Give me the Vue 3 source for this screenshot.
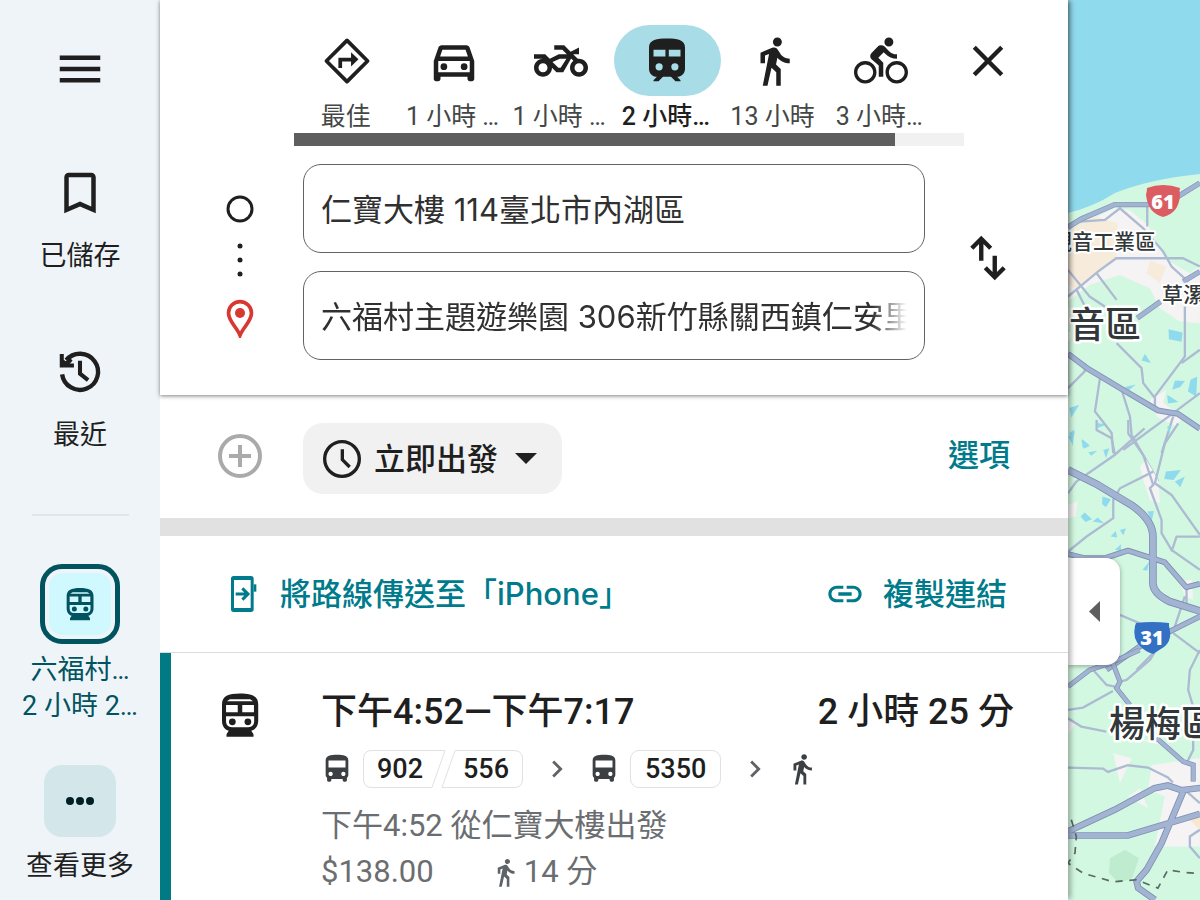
<script setup>
import { ref } from 'vue'

const glyphs = {
  menu: 'M3 18h18v-2H3v2zm0-5h18v-2H3v2zm0-7v2h18V6H3z',
  bookmark: 'M17 3H7c-1.1 0-1.99.9-1.99 2L5 21l7-3 7 3V5c0-1.1-.9-2-2-2zm0 15l-5-2.18L7 18V5h10v13z',
  car: 'M18.92 6.01C18.72 5.42 18.16 5 17.5 5h-11c-.66 0-1.21.42-1.42 1.01L3 12v8c0 .55.45 1 1 1h1c.55 0 1-.45 1-1v-1h12v1c0 .55.45 1 1 1h1c.55 0 1-.45 1-1v-8l-2.08-5.99zM6.85 7h10.29l1.04 3H5.81l1.04-3zM19 17H5v-5h14v5zM7.5 13a1.5 1.5 0 1 0 0 3 1.5 1.5 0 0 0 0-3zm9 0a1.5 1.5 0 1 0 0 3 1.5 1.5 0 0 0 0-3z',
  motorcycle: 'M20 11c-.18 0-.36.03-.53.05L17.41 9H20V6l-3.72 1.86L13.41 5H9v2h3.59l2 2H11l-4 2-2-2H0v2h4c-2.21 0-4 1.79-4 4s1.79 4 4 4 4-1.79 4-4l2 2h3l3.49-6.1 1.01 1.01c-.91.73-1.5 1.84-1.5 3.09 0 2.21 1.79 4 4 4s4-1.79 4-4-1.79-4-4-4zM4 17c-1.1 0-2-.9-2-2s.9-2 2-2 2 .9 2 2-.9 2-2 2zm7.84-2h-1.01L8.2 12.4l3.27-1.4h2.94l-2.57 4zM20 17c-1.1 0-2-.9-2-2s.9-2 2-2 2 .9 2 2-.9 2-2 2z',
  train: 'M12 2c-4.42 0-8 .5-8 4v9.5C4 17.43 5.57 19 7.5 19L6 20.5v.5h2.23l2-2h3.54l2 2H18v-.5L16.5 19c1.93 0 3.5-1.57 3.5-3.5V6c0-3.5-3.58-4-8-4zM6 7h5.3v3H6zm6.8 0H18v3h-5.2zM8.5 13a1.6 1.6 0 1 1 0 3.2 1.6 1.6 0 0 1 0-3.2zm7 0a1.6 1.6 0 1 1 0 3.2 1.6 1.6 0 0 1 0-3.2z',
  walk: 'M13.5 5.5c1.1 0 2-.9 2-2s-.9-2-2-2-2 .9-2 2 .9 2 2 2zM9.8 8.9L7 23h2.1l1.8-8 2.1 2v6h2v-7.5l-2.1-2 .6-3C14.8 12 16.8 13 19 13v-2c-1.9 0-3.5-1-4.3-2.4l-1-1.6c-.4-.6-1-1-1.7-1-.3 0-.5.1-.8.1L6 8.3V13h2V9.6l1.8-.7',
  bike: 'M15.5 5.5c1.1 0 2-.9 2-2s-.9-2-2-2-2 .9-2 2 .9 2 2 2zM5 12c-2.8 0-5 2.2-5 5s2.2 5 5 5 5-2.2 5-5-2.2-5-5-5zm0 8.5c-1.9 0-3.5-1.6-3.5-3.5s1.6-3.5 3.5-3.5 3.5 1.6 3.5 3.5-1.6 3.5-3.5 3.5zm5.8-10l2.4-2.4.8.8c1.3 1.3 3 2.1 5.1 2.1V9c-1.5 0-2.7-.6-3.6-1.5l-1.9-1.9c-.5-.4-1-.6-1.6-.6s-1.1.2-1.4.6L7.8 8.4c-.4.4-.6.9-.6 1.4 0 .6.2 1.1.6 1.4L11 14v5h2v-6.2l-2.2-2.3zM19 12c-2.8 0-5 2.2-5 5s2.2 5 5 5 5-2.2 5-5-2.2-5-5-5zm0 8.5c-1.9 0-3.5-1.6-3.5-3.5s1.6-3.5 3.5-3.5 3.5 1.6 3.5 3.5-1.6 3.5-3.5 3.5z',
  close: 'M19 6.41L17.59 5 12 10.59 6.41 5 5 6.41 10.59 12 5 17.59 6.41 19 12 13.41 17.59 19 19 17.59 13.41 12z',
  link: 'M3.9 12c0-1.71 1.39-3.1 3.1-3.1h4V7H7c-2.76 0-5 2.24-5 5s2.24 5 5 5h4v-1.9H7c-1.71 0-3.1-1.39-3.1-3.1zM8 13h8v-2H8v2zm9-6h-4v1.9h4c1.71 0 3.1 1.39 3.1 3.1s-1.39 3.1-3.1 3.1h-4V17h4c2.76 0 5-2.24 5-5s-2.24-5-5-5z',
  bus: 'M4 16c0 .88.39 1.67 1 2.22V20c0 .55.45 1 1 1h1c.55 0 1-.45 1-1v-1h8v1c0 .55.45 1 1 1h1c.55 0 1-.45 1-1v-1.78c.61-.55 1-1.34 1-2.22V6c0-3.5-3.58-4-8-4s-8 .5-8 4v10zm3.5 1c-.83 0-1.5-.67-1.5-1.5S6.67 14 7.5 14s1.5.67 1.5 1.5S8.33 17 7.5 17zm9 0c-.83 0-1.5-.67-1.5-1.5s.67-1.5 1.5-1.5 1.5.67 1.5 1.5-.67 1.5-1.5 1.5zm1.5-6H6V6h12v5z',
  chevron: 'M10 6L8.59 7.41 13.17 12l-4.58 4.59L10 18l6-6z',
  railcar: 'M12 2.4C6.8 2.4 4 3.6 4 7.2v7.5c0 2.5 1.5 4 3 4.3l-1 1.5v1.2h12v-1.2L17 19c1.5-.3 3.1-1.8 3.1-4.3V7.2C20.1 3.6 17.2 2.4 12 2.4zM7.5 5h9l1.3.9H6.2zM5.8 7.5H11v3.3H5.8zm7.200 0h5.200v3.300H13zM5.800 12.600h12.500v2.200c0 1.600-1 2.600-2.600 2.600H8.400c-1.600 0-2.600-1-2.600-2.600zM8.600 13.500a1.500 1.500 0 1 0 0 3 1.500 1.500 0 0 0 0-3zm6.900 0a1.500 1.500 0 1 0 0 3 1.500 1.500 0 0 0 0-3z'
}

const modes = [
  { icon: 'best', label: '最佳' },
  { icon: 'car', label: '1 小時 …' },
  { icon: 'motorcycle', label: '1 小時 …' },
  { icon: 'train', label: '2 小時…' },
  { icon: 'walk', label: '13 小時' },
  { icon: 'bike', label: '3 小時…' }
]
const activeMode = ref('train')
const origin = ref('仁寶大樓 114臺北市內湖區')
const destination = ref('六福村主題遊樂園 306新竹縣關西鎮仁安里')
</script>

<template>
  <div class="app" lang="zh-Hant">
    <nav class="rail">
      <button class="rail-item" aria-label="選單">
        <svg class="i54" viewBox="0 0 24 24"><path :d="glyphs.menu" /></svg>
      </button>
      <button class="rail-item saved">
        <svg class="i54" viewBox="0 0 24 24"><path :d="glyphs.bookmark" /></svg>
        <span>已儲存</span>
      </button>
      <button class="rail-item recent">
        <svg class="i54" viewBox="0 0 160 160">
          <g fill="none" stroke="currentColor" stroke-width="13">
            <path d="M27 87a53.500 53.500 0 1 0 12-42" />
            <path d="M80 47v38l24 19" stroke-width="12" />
          </g>
          <path d="M20 27h12v17l14 11h16v12H20z" />
          <path d="M30 58l18-22 10 10-12 14z" />
        </svg>
        <span>最近</span>
      </button>
      <hr class="rail-rule" />
      <button class="rail-item trip">
        <span class="trip-tile"><svg class="i40" viewBox="0 0 24 24"><path fill-rule="evenodd" :d="glyphs.railcar" /></svg></span>
        <span class="trip-text">六福村…<br />2 小時 2…</span>
      </button>
      <button class="rail-item more">
        <span class="more-tile"><svg class="i40" viewBox="0 0 40 40"><circle cx="10" cy="20" r="4" /><circle cx="20" cy="20" r="4" /><circle cx="30" cy="20" r="4" /></svg></span>
        <span>查看更多</span>
      </button>
    </nav>

    <main class="panel">
      <header class="search">
        <div class="mode-row">
          <div class="mode-scroller">
            <div class="modes">
              <button v-for="m in modes" :key="m.icon" class="mode" :class="{ active: activeMode === m.icon }" @click="activeMode = m.icon">
                <span class="pill">
                  <svg v-if="m.icon === 'best'" class="i54" viewBox="0 0 160 160">
                    <path d="M80 19l61 61-61 61-61-61z" fill="none" stroke="currentColor" stroke-width="11" stroke-linejoin="round" />
                    <path d="M60 101V76h36" fill="none" stroke="currentColor" stroke-width="11" />
                    <path d="M92 54l22 21-22 21z" />
                  </svg>
                  <svg v-else class="i54" viewBox="0 0 24 24"><path fill-rule="evenodd" :d="glyphs[m.icon]" /></svg>
                </span>
                <span class="mode-label">{{ m.label }}</span>
              </button>
            </div>
            <div class="scrollbar"><div class="thumb"></div></div>
          </div>
          <button class="close" aria-label="關閉"><svg viewBox="1 1 22 22"><path :d="glyphs.close" /></svg></button>
        </div>

        <div class="waypoints">
          <div class="markers">
            <svg class="start" viewBox="0 0 28 28"><circle cx="14" cy="14" r="12" fill="none" stroke="currentColor" stroke-width="3" /></svg>
            <svg class="dots" viewBox="0 0 10 34"><circle cx="5" cy="3" r="2.500" /><circle cx="5" cy="17" r="2.500" /><circle cx="5" cy="31" r="2.500" /></svg>
            <svg class="pin" viewBox="0 0 90 120">
              <path d="M45 11C26 11 10.500 26 10.500 45c0 25 24 41 34.500 67 10.500-26 34.500-42 34.500-67C79.500 26 64 11 45 11z" fill="none" stroke="currentColor" stroke-width="11" />
              <circle cx="45" cy="45" r="15" />
            </svg>
          </div>
          <div class="fields">
            <div class="field"><input v-model="origin" aria-label="起點" /></div>
            <div class="field"><input v-model="destination" class="fade" aria-label="目的地" /></div>
          </div>
          <button class="swap" aria-label="交換起點與目的地">
            <svg class="i54" viewBox="0 0 160 160" fill="none" stroke="currentColor" stroke-width="13">
              <path d="M60 88V24M32 51l28-28 28 28M100 73v64M72 109l28 28 28-28" />
            </svg>
          </button>
        </div>
      </header>

      <section class="options">
        <button class="add" aria-label="新增目的地">
          <svg viewBox="0 0 46 46" fill="none" stroke="currentColor" stroke-width="4"><circle cx="23" cy="23" r="20" /><path d="M12 23h22M23 12v22" /></svg>
        </button>
        <button class="depart">
          <svg class="i40" viewBox="0 0 120 120" fill="none" stroke="currentColor" stroke-width="10"><circle cx="60" cy="60" r="52" /><path d="M61 31v31l22 22" /></svg>
          <span>立即出發</span>
          <svg class="caret" viewBox="0 0 22 11"><path d="M0 0h22L11 11z" /></svg>
        </button>
        <a class="opt-link" href="#">選項</a>
      </section>

      <section class="share">
        <a href="#" class="send">
          <svg class="i40" viewBox="0 0 120 120">
            <path d="M14 6h52q8 0 8 8v92q0 8-8 8H14q-8 0-8-8V14q0-8 8-8zm1 12v84h50V18z" fill-rule="evenodd" />
            <path d="M74 31h8v22h-8z" />
            <path d="M20 60h32M40 43l17 17-17 17" fill="none" stroke="currentColor" stroke-width="9" />
          </svg>
          <span>將路線傳送至「iPhone」</span>
        </a>
        <a href="#" class="copy">
          <svg class="i40" viewBox="0 0 24 24"><path :d="glyphs.link" /></svg>
          <span>複製連結</span>
        </a>
      </section>

      <article class="route">
        <svg class="i54 route-icon" viewBox="0 0 24 24"><path fill-rule="evenodd" :d="glyphs.railcar" /></svg>
        <div class="route-body">
          <div class="route-head"><h2>下午4:52—下午7:17</h2><strong>2 小時 25 分</strong></div>
          <div class="legs">
            <svg class="i34" viewBox="0 0 24 24"><path :d="glyphs.bus" /></svg>
            <span class="pair">
              <svg class="pair-outline" viewBox="0 0 160 38" fill="none" stroke="currentColor"><path d="M82 .5H9Q.5 .5 .5 9v20q0 8.500 8.500 8.500h60zM92 .5h59q8.500 0 8.500 8.500v20q0 8.500-8.500 8.500H79z" /></svg>
              <b>902</b><b>556</b>
            </span>
            <svg class="i34 sep" viewBox="0 0 24 24"><path :d="glyphs.chevron" /></svg>
            <svg class="i34" viewBox="0 0 24 24"><path :d="glyphs.bus" /></svg>
            <span class="chip">5350</span>
            <svg class="i34 sep" viewBox="0 0 24 24"><path :d="glyphs.chevron" /></svg>
            <svg class="i34" viewBox="0 0 24 24"><path :d="glyphs.walk" /></svg>
          </div>
          <p>下午4:52 從仁寶大樓出發</p>
          <p class="fare"><span>$138.00</span><svg viewBox="0 0 24 24"><path :d="glyphs.walk" /></svg><span>14 分</span></p>
        </div>
      </article>
    </main>

    <aside class="map">
      <svg class="map-art" viewBox="1068 0 132 900" preserveAspectRatio="xMinYMin slice">
        <rect x="1068" width="1400" height="900" fill="#d3f8e2" />
        <path d="M1068 0h1400v120L1200 174q-50 5-85 19-22 14-47 20z" fill="#90daee" />
        <g transform="translate(1060 150) scale(.333)">
          <path d="M24 240l140-65 45 5 55 45 50 100 75 45 31-20v170l-60-5-60-40-30-60-90-40-90 30-66 50z" fill="#f5f3f3" />
          <path d="M24 240l80-40 70 20-5 100-60 50-60 50-25-20zM270 330l50 20-20 50-40-30z" fill="#f7ecdc" />
          <path d="M270 750l50-30-10 40 60 40-20 30-60-30z" fill="#f5f3f3" />
          <g fill="#90daee"><path d="M326 538l42 10-3 28-38-8zM255 612l18 28-28-8zM345 692l30 2-14 18-24 8zM392 690l20-10-3 60-25-15zM322 735l34 22-32 4zM195 712l33-8-22 18zM28 775l30-10-24 38zM110 820l32 4-28 10zM28 850l15-10-5 50zM66 868l22 18-20 8z" /></g>
          <g fill="none" stroke="#adbbd2" stroke-width="7">
            <path d="M60 215l75-5 45-35 70 60 60 70 25 45 50 45M262 170v60M24 360l65 80 60 40M24 440l90-75 55-40h200l51 25M110 370l60 80M50 420l30 60M170 580l75 75 5 45 35 45M375 470v150l-90 120v40M420 600l-55 40M24 715l50-50v-25M120 685l-15 100 50 65 5 60M185 720l25 80 5 55 80 140M420 730l-80 60-150 110M340 800l-35 110" />
          </g>
          <g fill="none" stroke="#8495b9" stroke-width="16"><path d="M24 232l40-25 100-43h100l75-15 81-50M232 505l70-50M370 395l50-30" /><path d="M24 612l60 45 100 60 110 65 60 10 66 45" stroke-width="18" /></g>
          <g fill="none" stroke="#a3b3d2" stroke-width="12"><path d="M24 232l40-25 100-43h100l75-15 81-50M232 505l70-50M370 395l50-30M24 612l60 45 100 60 110 65 60 10 66 45" /></g>
        </g>
        <g transform="translate(1060 420) scale(.333)">
          <path d="M240 140l20-20 35 60 5 70-30-10-20-60zM24 255l28-10-5 45-23 5zM360 485l35-5 5 60-25-10z" fill="#f5f3f3" />
          <g fill="#90daee"><path d="M318 155l45-5-22 30-28-3zM345 185l30-15-14 32zM64 60l25 18-18 8zM85 97l27-5-18 15zM130 90l18-5-10 30zM128 230l25 8-15 24-12-10zM62 290l12-12 22 20-20 8zM98 305l15-12 20 18zM152 350l15-17 5 20zM180 330l18-5-8 22zM165 390l18-17v20zM248 450l20-25-6 28zM262 275l20-2-6 28zM25 50l20-15-10 35zM322 20l10-5-4 28z" /></g>
          <g fill="none" stroke="#adbbd2" stroke-width="7">
            <path d="M24 220l25-35 115-80 90-80M110 0v30l45 25 10 50M205 0v40l45 65 30 90-10 10 35 95v40l30 50 85 60M355 10l-40 60-30 120 50 35 85 120M280 155l-100 50-20 35v55l-80 55-56 45M420 350h-70l-15 45M180 585l70 30M420 700l-80-60M375 530l-30 90M280 700l-50 50M380 500v50" />
          </g>
          <g fill="none" stroke="#7d8eb5" stroke-linejoin="round"><path d="M24 402l50 13h60l70-23 110 35 65 75 41-10M420 590l-80 40-100 50-100 70" stroke-width="17" /><path d="M24 150l90 45 100 60q65 45 65 95v140q0 30 50 55l95 30" stroke-width="23" /></g>
          <g fill="none" stroke="#a3b3d2" stroke-linejoin="round"><path d="M24 402l50 13h60l70-23 110 35 65 75 41-10M420 590l-80 40-100 50-100 70" stroke-width="12" /><path d="M24 150l90 45 100 60q65 45 65 95v140q0 30 50 55l95 30" stroke-width="18" /></g>
        </g>
        <g transform="translate(1060 650) scale(.333)">
          <path d="M160 310l55 15-35 75zM275 345l145-20v265H285l30-150-50-20zM205 440l35-25 25 60zM24 205l26 10-26 40zM240 270h60l20 20z" fill="#f5f3f3" />
          <path d="M150 625l45-25 42 25-20 60-40 15-30-30z" fill="#bfeccf" />
          <path d="M390 510l30-10v40z" fill="#f9e6cf" />
          <g fill="none" stroke="#adbbd2" stroke-width="7"><path d="M24 180l45-7 90-50M180 95l20-5 70-60 30-48M95 55l45 50 25 5M24 205l40 25 75 15M24 353l105 3 15 10 60-20 60 7 60 30 15 15M420 0l-30 60-5 60 15 50v130l-20 40M375 420l45 40M420 540l-30 20v30l30 35" /></g>
          <g fill="none" stroke="#7d8eb5"><path d="M24 110l65-50 60-20 90-40M155 30l25 65-10 20 40 50M290 265l80 70 30 10v50" stroke-width="15" /><path d="M24 545l140-65 120-65 40-8 40 14 60-7M24 557h180l216-65M370 425l-65 155-45 80-30 35 5 20 50 35" stroke-width="20" /></g>
          <g fill="none" stroke="#a3b3d2"><path d="M24 110l65-50 60-20 90-40M155 30l25 65-10 20 40 50M290 265l80 70 30 10v50" stroke-width="11" /><path d="M24 545l140-65 120-65 40-8 40 14 60-7M24 557h180l216-65M370 425l-65 155-45 80-30 35 5 20 50 35" stroke-width="15" /></g>
          <path d="M34 510l15 50-4 50-21 30 45 30 90 26 70-6 65 25 30-55 50 8 60 4" fill="none" stroke="#596963" stroke-width="5" stroke-dasharray="22 20" />
        </g>
        <path d="M1147 188q16-6 33 0-1 3 0 7-1 18-17 22-15-4-17-22 1-4 1-7z" fill="#db5d62" />
        <path d="M1136 623q16-2 33 0v3q4 14-5 21l-11 7q-7-2-12-7-9-8-6-21z" fill="#3471c5" />
        <g class="shield-text"><text x="1163" y="209">61</text><text x="1152" y="645">31</text></g>
        <g class="place">
          <text x="1156" y="249" text-anchor="end" class="small">觀音工業區</text>
          <text x="1162" y="302" class="small">草漯</text>
          <text x="1141" y="338" text-anchor="end">觀音區</text>
          <text x="1109" y="737">楊梅區</text>
        </g>
      </svg>
      <button class="collapse" aria-label="收合側邊面板"><svg viewBox="0 0 11 21"><path d="M11 0v21L0 10.500z" /></svg></button>
    </aside>
  </div>
</template>

<style>
body { margin: 0; overflow: hidden; }
</style>

<style scoped>
.app {
  display: grid;
  grid-template-columns: 160px minmax(0, 908px) minmax(132px, 1fr);
  height: 100vh;
  overflow: hidden;
  background: #fff;
  color: #1f1f1f;
  font-family: Roboto, "Noto Sans CJK TC", sans-serif;
}
button {
  margin: 0;
  padding: 0;
  border: 0;
  background: none;
  color: inherit;
  font: inherit;
  cursor: pointer;
}
a { color: #007b8b; text-decoration: none; }
svg { display: block; flex: none; fill: currentColor; }
svg[fill="none"] { fill: none; }
.i54 { width: 54px; height: 54px; }
.i40 { width: 40px; height: 40px; }
.i34 { width: 34px; height: 34px; }

.rail {
  display: flex;
  flex-direction: column;
  align-items: center;
  padding-top: 42px;
  background: #eff4f8;
}
.rail-item {
  display: flex;
  flex-direction: column;
  align-items: center;
  gap: 18px;
  font-size: 27px;
  line-height: 36px;
}
.saved { margin-top: 70px; }
.recent { margin-top: 71px; }
.rail-rule {
  width: 97px;
  height: 2px;
  margin: 61px 0 48px;
  border: 0;
  background: #e3e6e8;
}
.trip { gap: 8px; color: #00535f; }
.trip-tile {
  display: grid;
  place-items: center;
  box-sizing: border-box;
  width: 80px;
  height: 80px;
  border: 5px solid #00535f;
  border-radius: 22px;
  background: #d0f8ff;
  box-shadow: inset 0 0 0 4px #eff4f8;
}
.more { gap: 11px; margin-top: 41px; }
.more-tile {
  display: grid;
  place-items: center;
  width: 72px;
  height: 72px;
  border-radius: 18px;
  background: #d3e6ea;
  color: #001f25;
}

.panel { position: relative; z-index: 1; background: #fff; box-shadow: 4px 0 5px -1px rgba(0, 0, 0, .3); }
.search {
  position: relative;
  padding: 25px 0 35px;
  background: #fff;
  box-shadow: 0 1px 4px rgba(0, 0, 0, .5);
}
.mode-row { display: flex; padding: 0 56px 0 134px; }
.mode-scroller { flex: 1; min-width: 0; overflow: hidden; }
.modes { display: grid; grid-template-columns: repeat(6, minmax(0, 1fr)); width: 640px; }
.mode { color: #1f1f1f; }
.pill { display: grid; place-items: center; height: 71px; border-radius: 36px; }
.active .pill { background: #a8dde8; }
.mode-label {
  display: block;
  margin-top: 5px;
  padding-right: 3px;
  color: #444746;
  font-size: 25px;
  line-height: 32px;
  white-space: nowrap;
}
.active .mode-label { color: #1f1f1f; font-weight: 500; }
.scrollbar { height: 13px; background: #f1f1f1; }
.thumb { width: 89.7%; height: 100%; background: #5e5e5e; }
.close { width: 48px; height: 71px; }
.close svg { width: 48px; height: 48px; }

.waypoints { display: grid; grid-template-columns: 143px minmax(0, 1fr) 143px; margin-top: 18px; }
.markers {
  display: flex;
  flex-direction: column;
  align-items: center;
  width: 46px;
  padding: 31px 0 0 57px;
}
.start { width: 28px; height: 28px; }
.dots { width: 10px; height: 34px; margin: 20px 0 21px; }
.pin { width: 30px; height: 40px; color: #d93831; }
.fields { display: grid; gap: 18px; }
.field {
  box-sizing: border-box;
  height: 89px;
  padding: 0 17px;
  border: 1px solid #5f6368;
  border-radius: 18px;
}
.field input {
  box-sizing: border-box;
  width: 100%;
  height: 100%;
  padding: 0 0 2px;
  border: 0;
  outline: 0;
  background: none;
  color: #303030;
  font: 31px Inter, "Noto Sans CJK TC", sans-serif;
}
.fade { mask-image: linear-gradient(to right, #000 94%, transparent); }
.swap { padding: 0 0 8px 36px; justify-self: start; }

.options {
  display: flex;
  align-items: flex-start;
  padding: 28px 58px 24px 57px;
  font-size: 31px;
  font-weight: 500;
}
.add { height: 66px; color: #aaa; }
.add svg { width: 46px; height: 46px; }
.depart {
  display: flex;
  align-items: center;
  height: 71px;
  margin-left: 40px;
  padding: 0 25px 0 19px;
  border-radius: 20px;
  background: #f1f1f1;
}
.depart span { margin: 0 17px 4px 12px; }
.caret { width: 22px; height: 11px; }
.opt-link { margin-left: auto; line-height: 66px; }

.share {
  display: flex;
  align-items: center;
  justify-content: space-between;
  height: 116px;
  padding: 0 61px 0 69px;
  border-top: 18px solid #e1e1e1;
  border-bottom: 1px solid #dadce0;
  font: 500 31px Inter, "Noto Sans CJK TC", sans-serif;
}
.share a { display: flex; align-items: center; }
.share span { padding-bottom: 6px; }
.send { gap: 11px; }
.copy { gap: 18px; }

.route {
  display: flex;
  height: 100%;
  padding: 35px 54px 0 42px;
  border-left: 11px solid #007b84;
}
.route-body { flex: 1; margin-left: 54px; }
.route-head {
  display: flex;
  justify-content: space-between;
  padding-top: 2px;
  font-size: 36px;
  line-height: 44px;
  font-weight: 500;
}
.route-head h2, .route-head strong { margin: 0; font: inherit; }
.legs {
  display: flex;
  align-items: center;
  height: 38px;
  margin: 16px 0 15px -1px;
  color: #3c4043;
}
.pair {
  position: relative;
  display: flex;
  justify-content: space-between;
  box-sizing: border-box;
  width: 160px;
  margin-left: 9px;
  padding: 0 14px;
  color: #1f1f1f;
  font-size: 27px;
  line-height: 38px;
}
.pair b { font-weight: 500; }
.pair-outline { position: absolute; inset: 0; width: 160px; height: 38px; color: #dfe1e5; }
.chip {
  box-sizing: border-box;
  height: 38px;
  margin-left: 9px;
  padding: 0 14px;
  border: 1px solid #dfe1e5;
  border-radius: 9px;
  color: #1f1f1f;
  font-size: 27px;
  line-height: 36px;
  font-weight: 500;
}
.sep { margin: 0 13px 0 17px; color: #5f6368; }
.route-body p { margin: 0; color: #6b6e71; font-size: 31px; line-height: 46px; }
.fare { display: flex; align-items: center; }
.fare svg { width: 31px; height: 31px; margin: 0 3px 0 56px; color: #5f6368; }

.map { position: relative; background: #d3f8e2; }
.map-art { width: 100%; height: 100%; }
.shield-text {
  fill: #fff;
  font: 800 20px "Open Sans", sans-serif;
  text-anchor: middle;
}
.place {
  fill: #32383a;
  stroke: #fff;
  stroke-width: 5px;
  stroke-linejoin: round;
  paint-order: stroke;
  font: 500 36px "Noto Sans CJK TC", sans-serif;
}
.place .small { font-size: 21px; stroke-width: 4px; }
.collapse {
  position: absolute;
  top: 558px;
  left: 0;
  display: grid;
  place-items: center;
  width: 52px;
  height: 107px;
  border-radius: 0 14px 14px 0;
  background: #fff;
  color: #5e5e5e;
  box-shadow: 0 1px 5px rgba(0, 0, 0, .35);
}
.collapse svg { width: 11px; height: 21px; }
</style>
